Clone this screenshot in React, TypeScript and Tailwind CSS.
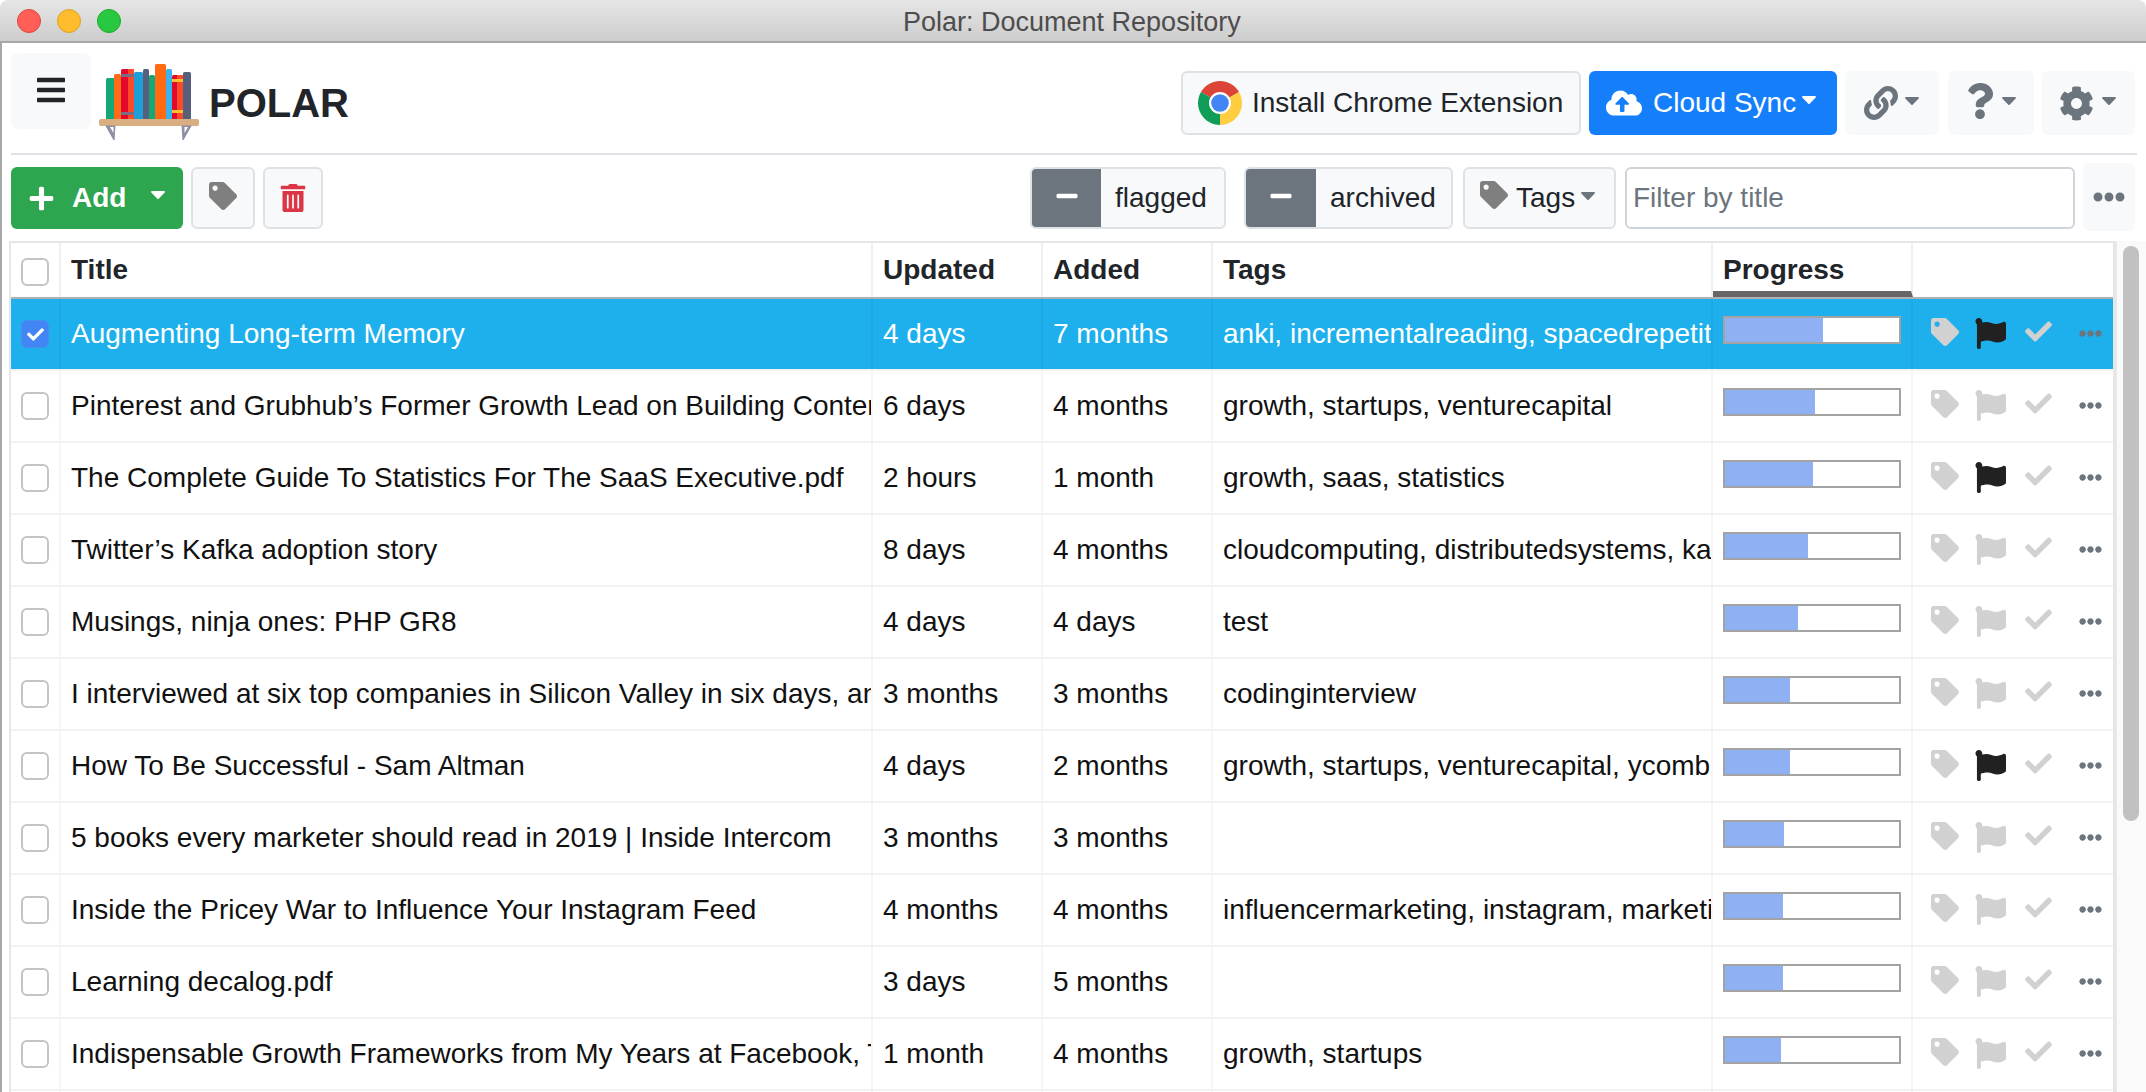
import { FaBars, FaCaretDown, FaCheck, FaCloudUploadAlt, FaCog, FaEllipsisH, FaFlag, FaLink, FaMinus, FaPlus, FaQuestion, FaTag, FaTrashAlt } from 'react-icons/fa';

const rows = [
  { title: 'Augmenting Long-term Memory', updated: '4 days', added: '7 months', tags: 'anki, incrementalreading, spacedrepetition', progress: 98, flagged: true, selected: true },
  { title: 'Pinterest and Grubhub’s Former Growth Lead on Building Content & Community', updated: '6 days', added: '4 months', tags: 'growth, startups, venturecapital', progress: 90 },
  { title: 'The Complete Guide To Statistics For The SaaS Executive.pdf', updated: '2 hours', added: '1 month', tags: 'growth, saas, statistics', progress: 88, flagged: true },
  { title: 'Twitter’s Kafka adoption story', updated: '8 days', added: '4 months', tags: 'cloudcomputing, distributedsystems, kafka', progress: 83 },
  { title: 'Musings, ninja ones: PHP GR8', updated: '4 days', added: '4 days', tags: 'test', progress: 73 },
  { title: 'I interviewed at six top companies in Silicon Valley in six days, and stumbled into six job offers', updated: '3 months', added: '3 months', tags: 'codinginterview', progress: 65 },
  { title: 'How To Be Successful - Sam Altman', updated: '4 days', added: '2 months', tags: 'growth, startups, venturecapital, ycombinator', progress: 65, flagged: true },
  { title: '5 books every marketer should read in 2019 | Inside Intercom', updated: '3 months', added: '3 months', tags: '', progress: 59 },
  { title: 'Inside the Pricey War to Influence Your Instagram Feed', updated: '4 months', added: '4 months', tags: 'influencermarketing, instagram, marketing', progress: 58 },
  { title: 'Learning decalog.pdf', updated: '3 days', added: '5 months', tags: '', progress: 58 },
  { title: 'Indispensable Growth Frameworks from My Years at Facebook, Twitter and Wealthfront', updated: '1 month', added: '4 months', tags: 'growth, startups', progress: 56 },
  { title: 'The Ultimate Guide to Growth', updated: '1 month', added: '4 months', tags: 'growth', progress: 54 },
];

function BooksLogo() {
  const books = [
    ['7', '14', '9', '42', '#14a878'],
    ['15', '10', '7', '46', '#ff6b1a'],
    ['22', '5', '13', '51', '#e2092c'],
    ['35', '8', '9', '48', '#1e9fd8'],
    ['44', '5', '6', '51', '#56607a'],
    ['50', '11', '6', '45', '#14a878'],
    ['56', '0', '11', '56', '#ff6a13'],
    ['67', '5', '6', '51', '#39b4ec'],
    ['73', '11', '11', '45', '#e2092c'],
    ['84', '8', '8', '48', '#56607a'],
  ];
  return (
    <svg width="100" height="77" viewBox="0 0 100 77">
      {books.map(([x, y, w, h, fill]) => (
        <rect key={x} x={x} y={y} width={w} height={h} rx="1.5" fill={fill} />
      ))}
      <rect x="29" y="5" width="6" height="51" fill="#ff4a2a" />
      <rect x="78" y="11" width="6" height="45" fill="#ff4a2a" />
      <rect x="22" y="10" width="13" height="3" fill="#7c6a80" />
      <rect x="22" y="48" width="13" height="3" fill="#7c6a80" />
      <rect x="73" y="15" width="11" height="3" fill="#ffc02e" />
      <rect x="73" y="46" width="11" height="3" fill="#ffc02e" />
      <rect x="0" y="55" width="100" height="7" rx="2" fill="#d9ae80" />
      <path d="M7 62 L15 76 L16 62 Z M83 62 L84 76 L92 62 Z" fill="#8d8fa3" stroke="#8d8fa3" strokeWidth="1" />
      <path d="M11 63 L14.5 69 L14.5 63 Z M85.5 63 L85.5 69 L89 63 Z" fill="#ffffff" />
    </svg>
  );
}

function ChromeLogo() {
  return (
    <svg width="44" height="44" viewBox="4 4 40 40">
      <path d="M24 24 L6.7 14 A20 20 0 0 1 41.3 14 Z" fill="#db4437" />
      <path d="M24 24 L24 44 A20 20 0 0 1 6.7 14 Z" fill="#0f9d58" />
      <path d="M24 24 L41.3 14 A20 20 0 0 1 24 44 Z" fill="#ffcd40" />
      <circle cx="24" cy="24" r="10" fill="#ffffff" />
      <circle cx="24" cy="24" r="8" fill="#4285f4" />
    </svg>
  );
}

function Row({ title, updated, added, tags, progress, flagged, selected }: (typeof rows)[number] & { flagged?: boolean; selected?: boolean }) {
  const divider = selected ? 'border-[#1ca8e2]' : 'border-[#f5f5f5]';
  return (
    <div className={`flex h-[72px] shrink-0 border-b-2 border-[#f2f2f2] text-[28px] ${selected ? 'bg-[#1eb0ec] text-white' : 'text-[#111111]'}`}>
      <div className={`flex w-[50px] shrink-0 items-center justify-center border-r-2 ${divider}`}>
        {selected ? (
          <span className="flex h-[28px] w-[28px] items-center justify-center rounded-[6px] border border-[#4a8df0] bg-[#4285f4] text-white">
            <FaCheck size={17} />
          </span>
        ) : (
          <span className="h-[28px] w-[28px] rounded-[6px] border-2 border-[#c4c4c4] bg-white" />
        )}
      </div>
      <div className={`flex w-[812px] shrink-0 items-center overflow-hidden whitespace-nowrap border-r-2 pl-[10px] ${divider}`}>{title}</div>
      <div className={`flex w-[170px] shrink-0 items-center overflow-hidden whitespace-nowrap border-r-2 pl-[10px] ${divider}`}>{updated}</div>
      <div className={`flex w-[170px] shrink-0 items-center overflow-hidden whitespace-nowrap border-r-2 pl-[10px] ${divider}`}>{added}</div>
      <div className={`flex w-[500px] shrink-0 items-center overflow-hidden whitespace-nowrap border-r-2 pl-[10px] ${divider}`}>{tags}</div>
      <div className={`w-[200px] shrink-0 border-r-2 pl-[10px] pt-[17px] ${divider}`}>
        <div className="h-[28px] w-[178px] border-2 border-[#a3a3a3] bg-white">
          <div className="h-full bg-[#8fb0f2]" style={{ width: progress }} />
        </div>
      </div>
      <div className="flex flex-1 items-start pl-[18px] pt-[19px]">
        <FaTag size={28} className="shrink-0 text-[#d1d1d1]" />
        <FaFlag size={31} className={`ml-[16px] shrink-0 ${flagged ? 'text-[#212121]' : 'text-[#d1d1d1]'}`} />
        <FaCheck size={27} className="ml-[19px] shrink-0 text-[#d1d1d1]" />
        <FaEllipsisH size={23} className="ml-[27px] mt-[4px] shrink-0 text-[#6c757d]" />
      </div>
    </div>
  );
}

export default function App() {
  return (
    <div className="flex h-[1092px] w-[2146px] flex-col overflow-hidden bg-white font-['Liberation_Sans',Arial,sans-serif]">
      {/* Window title bar */}
      <div className="flex h-[43px] shrink-0 items-center rounded-t-[8px] border-b-2 border-[#a8a8a8] bg-gradient-to-b from-[#e6e6e6] to-[#cdcdcd] pl-[17px]">
        <span className="h-[24px] w-[24px] rounded-full border border-[#e0443e] bg-[#ff5f57]" />
        <span className="ml-[16px] h-[24px] w-[24px] rounded-full border border-[#dea123] bg-[#ffbd2e]" />
        <span className="ml-[16px] h-[24px] w-[24px] rounded-full border border-[#1aab29] bg-[#28c840]" />
        <span className="ml-[782px] mt-[4px] text-[27px] text-[#4d4d4d]">Polar: Document Repository</span>
      </div>

      <div className="flex min-h-0 flex-1 flex-col border-l-2 border-[#a8a8a8]">
        {/* Top nav */}
        <div className="mx-[9px] flex h-[112px] shrink-0 border-b-2 border-[#dee2e6] pr-[2px]">
          <div className="mt-[10px] flex h-[76px] w-[80px] items-center justify-center rounded-[8px] bg-[#f8f9fa] pb-[3px] text-[#212529]">
            <FaBars size={32} />
          </div>
          <div className="ml-[8px] mt-[21px]">
            <BooksLogo />
          </div>
          <div className="ml-[10px] mt-[35px] text-[40px] font-bold leading-[50px] text-[#212529]">POLAR</div>
          <div className="ml-auto mt-[28px] flex h-[64px] text-[28px]">
            <button className="flex w-[400px] items-center rounded-[6px] border-2 border-[#dee2e6] bg-[#f8f9fa] pl-[15px] text-[#212529]">
              <ChromeLogo />
              <span className="ml-[10px]">Install Chrome Extension</span>
            </button>
            <button className="ml-[8px] flex w-[248px] items-center rounded-[6px] bg-[#157ffb] pl-[17px] text-white">
              <FaCloudUploadAlt size={36} />
              <span className="ml-[11px]">Cloud Sync</span>
              <FaCaretDown size={24} className="ml-[1px] mt-[-8px]" />
            </button>
            <button className="ml-[8px] flex w-[94px] items-center rounded-[6px] bg-[#f8f9fa] pl-[19px] text-[#6c757d]">
              <FaLink size={34} />
              <FaCaretDown size={24} className="ml-[2px] mt-[-6px]" />
            </button>
            <button className="ml-[9px] flex w-[86px] items-center rounded-[6px] bg-[#f8f9fa] pl-[14px] text-[#6c757d]">
              <FaQuestion size={36} className="mt-[-4px]" />
              <FaCaretDown size={24} className="ml-[-1px] mt-[-6px]" />
            </button>
            <button className="ml-[8px] flex w-[93px] items-center rounded-[6px] bg-[#f8f9fa] pl-[17px] text-[#6c757d]">
              <FaCog size={35} />
              <FaCaretDown size={24} className="ml-[3px] mt-[-6px]" />
            </button>
          </div>
        </div>

        {/* Toolbar */}
        <div className="mx-[9px] mt-[12px] flex h-[62px] shrink-0 pr-[2px] text-[28px]">
          <button className="flex w-[172px] items-center rounded-[6px] bg-[#2ea64f] pl-[17px] font-bold text-white">
            <FaPlus size={27} />
            <span className="ml-[17px]">Add</span>
            <FaCaretDown size={24} className="ml-[20px] mt-[-8px]" />
          </button>
          <button className="ml-[8px] flex w-[64px] items-center justify-center rounded-[6px] border-2 border-[#dee2e6] bg-[#f8f9fa] pb-[4px] text-[#7f7f7f]">
            <FaTag size={28} />
          </button>
          <button className="ml-[8px] flex w-[60px] items-center justify-center rounded-[6px] border-2 border-[#dee2e6] bg-[#f8f9fa] text-[#dc3545]">
            <FaTrashAlt size={28} />
          </button>
          <div className="ml-auto flex">
            <div className="flex w-[196px] overflow-hidden rounded-[6px] border-2 border-[#dee2e6] bg-[#f8f9fa] text-[#212529]">
              <span className="flex w-[69px] items-center justify-center bg-[#6c757d] pb-[4px] text-white">
                <FaMinus size={24} />
              </span>
              <span className="ml-[14px] flex items-center">flagged</span>
            </div>
            <div className="ml-[18px] flex w-[209px] overflow-hidden rounded-[6px] border-2 border-[#dee2e6] bg-[#f8f9fa] text-[#212529]">
              <span className="flex w-[70px] items-center justify-center bg-[#6c757d] pb-[4px] text-white">
                <FaMinus size={24} />
              </span>
              <span className="ml-[14px] flex items-center">archived</span>
            </div>
            <button className="ml-[10px] flex w-[153px] items-center rounded-[6px] border-2 border-[#dee2e6] bg-[#f8f9fa] pl-[15px] text-[#212529]">
              <FaTag size={28} className="mt-[-6px] text-[#7f7f7f]" />
              <span className="ml-[8px]">Tags</span>
              <FaCaretDown size={24} className="ml-[1px] mt-[-6px] text-[#6c757d]" />
            </button>
            <div className="ml-[9px] flex w-[450px] items-center rounded-[6px] border-2 border-[#ced4da] bg-white pl-[6px] text-[#6c757d]">Filter by title</div>
            <button className="ml-[8px] mt-[-4px] flex h-[68px] w-[52px] items-center justify-center rounded-[6px] bg-[#f8f9fa] text-[#6c757d]">
              <FaEllipsisH size={32} />
            </button>
          </div>
        </div>

        {/* Table and scrollbar */}
        <div className="mt-[12px] flex min-h-0 flex-1">
          <div className="ml-[7px] flex w-[2106px] shrink-0 flex-col overflow-hidden border-l-2 border-r-2 border-t-2 border-[#e6e6e6]">
            <div className="flex h-[56px] shrink-0 border-b-2 border-[#b0b0b0] text-[28px] font-bold text-[#212529]">
              <div className="flex w-[50px] shrink-0 items-center justify-center border-r-2 border-[#f0f0f0] pt-[4px]">
                <span className="h-[28px] w-[28px] rounded-[6px] border-2 border-[#c4c4c4] bg-white" />
              </div>
              <div className="flex w-[812px] shrink-0 items-center border-r-2 border-[#f0f0f0] pl-[10px]">Title</div>
              <div className="flex w-[170px] shrink-0 items-center border-r-2 border-[#f0f0f0] pl-[10px]">Updated</div>
              <div className="flex w-[170px] shrink-0 items-center border-r-2 border-[#f0f0f0] pl-[10px]">Added</div>
              <div className="flex w-[500px] shrink-0 items-center border-r-2 border-[#f0f0f0] pl-[10px]">Tags</div>
              <div className="flex w-[200px] shrink-0 items-center border-b-[6px] border-r-2 border-[#666666] border-r-[#f0f0f0] pl-[10px] pt-[6px]">Progress</div>
            </div>
            {rows.map((row) => (
              <Row key={row.title} {...row} />
            ))}
          </div>
          <div className="flex-1 border-l-2 border-[#e8e8e8] bg-[#fafafa] pl-[6px] pt-[5px]">
            <div className="h-[575px] w-[16px] rounded-full bg-[#c1c1c1]" />
          </div>
        </div>
      </div>
    </div>
  );
}
